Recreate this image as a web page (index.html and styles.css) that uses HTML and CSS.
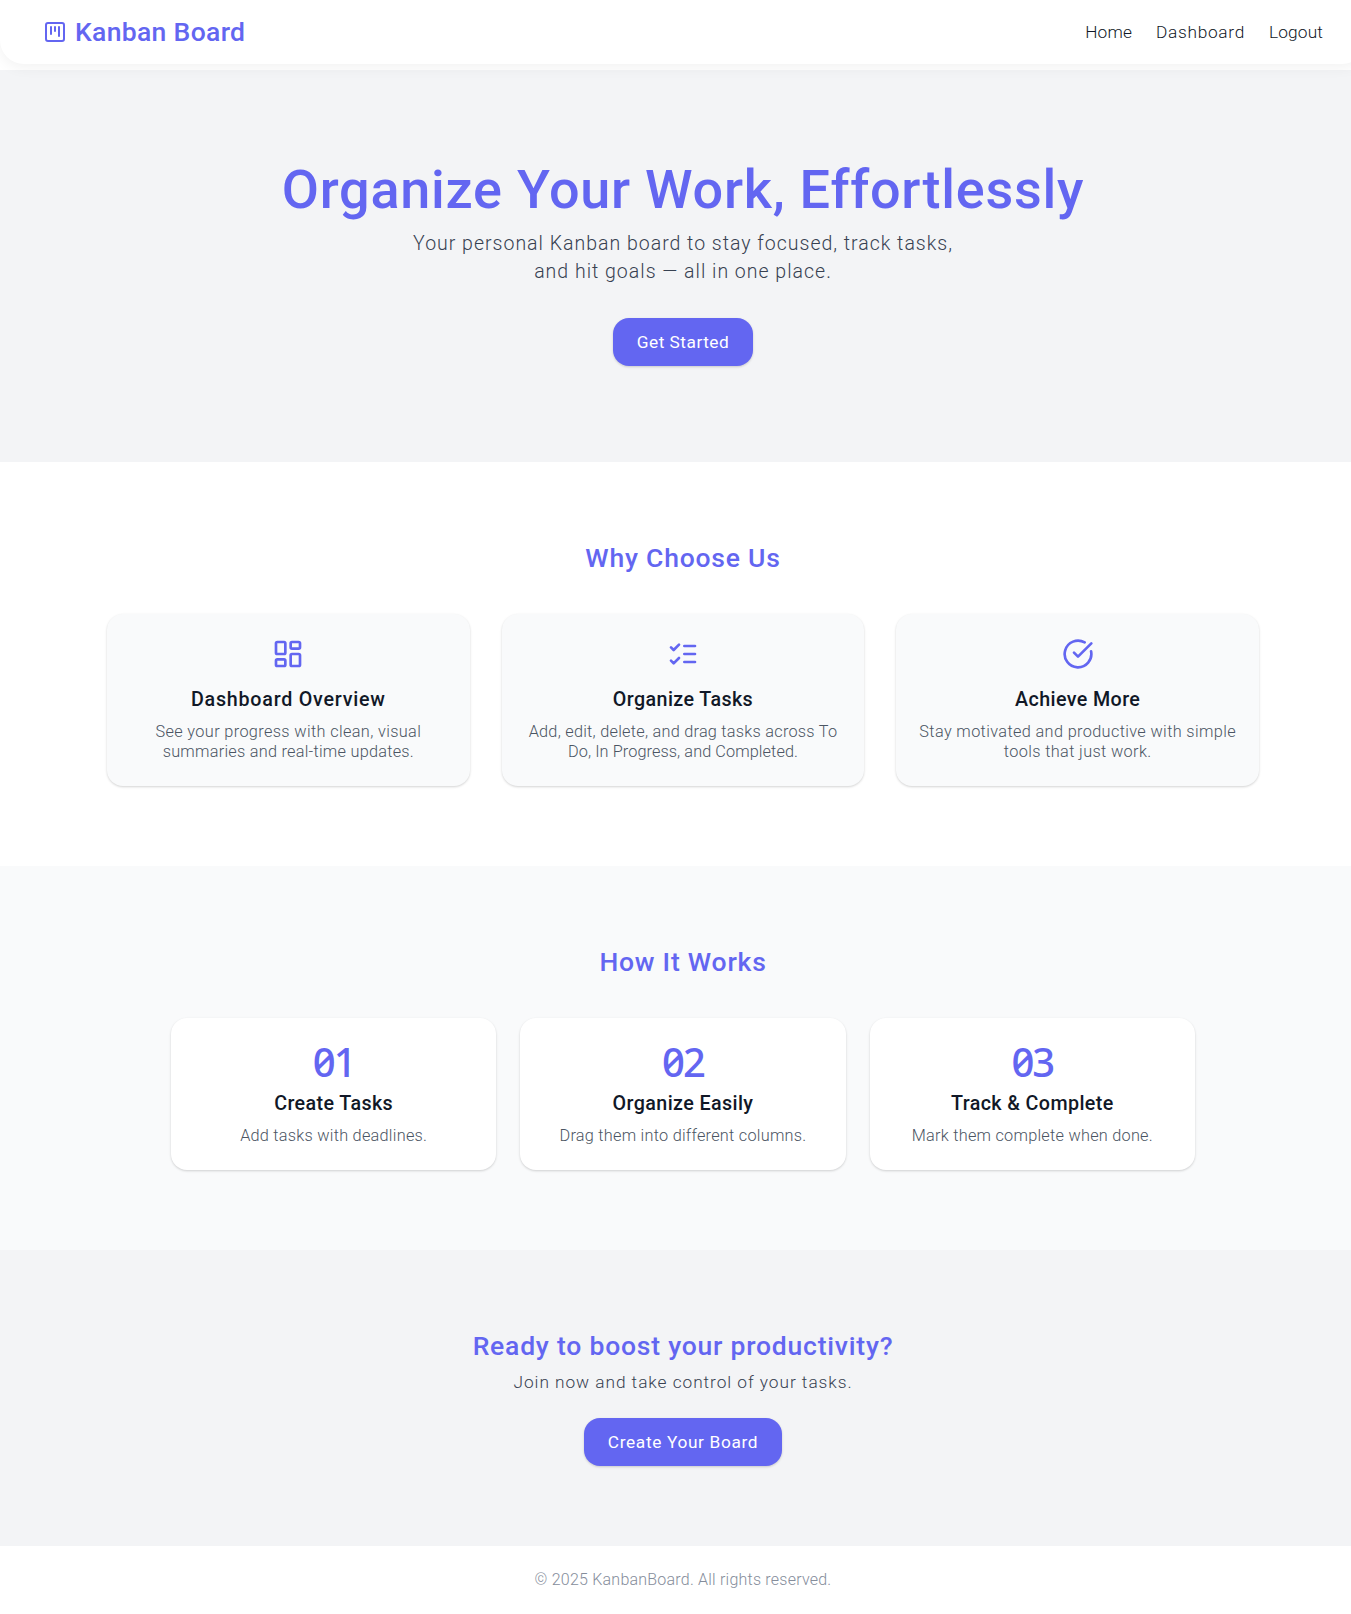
FILE: index.html
```html
<!DOCTYPE html>
<html lang="en">
<head>
<meta charset="utf-8">
<title>Kanban Board</title>
<link rel="stylesheet" href="styles.css">
</head>
<body>
<div class="page">
  <header class="header">
    <a class="logo">
      <svg class="icon logo-icon" viewBox="0 0 24 24"><rect x="3" y="3" width="18" height="18" rx="2"/><path d="M8 7v7M12 7v4M16 7v9"/></svg>
      <span>Kanban Board</span>
    </a>
    <nav class="nav">
      <a>Home</a>
      <a class="nav-wide">Dashboard</a>
      <a>Logout</a>
    </nav>
  </header>

  <main>
    <section class="hero">
      <h1 class="hero-title">Organize Your Work, Effortlessly</h1>
      <p class="hero-text">Your personal Kanban board to stay focused, track tasks,<br>and hit goals — all in one place.</p>
      <a class="button button-hero">Get Started</a>
    </section>

    <section class="section features">
      <h2 class="heading">Why Choose Us</h2>
      <div class="feature-grid">
        <article class="card card-muted">
          <svg class="icon card-icon" viewBox="0 0 24 24"><rect x="3" y="3" width="7" height="9" rx="1"/><rect x="14" y="3" width="7" height="5" rx="1"/><rect x="14" y="12" width="7" height="9" rx="1"/><rect x="3" y="16" width="7" height="5" rx="1"/></svg>
          <h3 class="card-title wide">Dashboard Overview</h3>
          <p class="card-text"><span class="loose">See your progress with clean, visual</span><br>summaries and real-time updates.</p>
        </article>
        <article class="card card-muted">
          <svg class="icon card-icon" viewBox="0 0 24 24"><path d="m3 17 2 2 4-4M3 7l2 2 4-4M13 6h8M13 12h8M13 18h8"/></svg>
          <h3 class="card-title">Organize Tasks</h3>
          <p class="card-text">Add, edit, delete, and drag tasks across To<br><span class="tight">Do, In Progress, and Completed.</span></p>
        </article>
        <article class="card card-muted">
          <svg class="icon card-icon" viewBox="0 0 24 24"><path d="M21.801 10A10 10 0 1 1 17 3.335"/><path d="m9 11 3 3L22 4"/></svg>
          <h3 class="card-title">Achieve More</h3>
          <p class="card-text"><span class="loose">Stay motivated and productive with simple<br>tools that just work.</span></p>
        </article>
      </div>
    </section>

    <section class="section steps">
      <h2 class="heading">How It Works</h2>
      <div class="step-grid">
        <article class="card">
          <div class="step-number">01</div>
          <h3 class="card-title">Create Tasks</h3>
          <p class="card-text">Add tasks with deadlines.</p>
        </article>
        <article class="card">
          <div class="step-number">02</div>
          <h3 class="card-title">Organize Easily</h3>
          <p class="card-text">Drag them into different columns.</p>
        </article>
        <article class="card">
          <div class="step-number">03</div>
          <h3 class="card-title">Track &amp; Complete</h3>
          <p class="card-text">Mark them complete when done.</p>
        </article>
      </div>
    </section>

    <section class="section cta">
      <h2 class="heading cta-heading">Ready to boost your productivity?</h2>
      <p class="cta-text">Join now and take control of your tasks.</p>
      <a class="button button-cta">Create Your Board</a>
    </section>
  </main>

  <footer class="footer">© 2025 KanbanBoard. All rights reserved.</footer>
</div>
</body>
</html>
```

FILE: styles.css
```css
* {
  box-sizing: border-box;
  margin: 0;
  padding: 0;
}

html {
  overflow: hidden;
}

body {
  font-family: Roboto, "Liberation Sans", sans-serif;
  color: #111827;
  background: #fff;
}

.page {
  width: 1366px;
}

.icon {
  display: block;
  fill: none;
  stroke: #6366f1;
  stroke-width: 2;
  stroke-linecap: round;
  stroke-linejoin: round;
}

/* Header */
.header {
  position: relative;
  display: flex;
  align-items: center;
  justify-content: space-between;
  height: 64px;
  margin-bottom: 6px;
  padding: 0 43px;
  background: #fff;
  border-radius: 0 0 24px 24px;
  box-shadow: 0 4px 14px rgba(0, 0, 0, 0.05);
}

.logo {
  display: flex;
  align-items: center;
  gap: 8px;
  color: #6366f1;
  font-size: 26.5px;
  font-weight: 500;
  letter-spacing: 0.33px;
  line-height: 32px;
}

.logo-icon {
  width: 24px;
  height: 24px;
}

.nav {
  display: flex;
  gap: 24px;
  color: #111827;
  font-size: 17.3px;
  font-weight: 300;
  letter-spacing: 0.15px;
  line-height: 24px;
}

.nav-wide {
  letter-spacing: 0.7px;
}

/* Hero */
.hero {
  display: flex;
  flex-direction: column;
  align-items: center;
  padding: 96px 0;
  background: #f3f4f6;
  text-align: center;
}

.hero-title {
  margin-bottom: 16px;
  color: #6366f1;
  font-size: 54px;
  font-weight: 500;
  letter-spacing: 0.74px;
  line-height: 48px;
}

.hero-text {
  margin-bottom: 32px;
  color: #374151;
  font-size: 19.5px;
  font-weight: 300;
  letter-spacing: 1px;
  line-height: 28px;
}

.button {
  display: flex;
  align-items: center;
  justify-content: center;
  height: 48px;
  color: #fff;
  background: #6366f1;
  border-radius: 16px;
  box-shadow: 0 1px 3px rgba(0, 0, 0, 0.1), 0 1px 2px rgba(0, 0, 0, 0.08);
  font-size: 17.3px;
  font-weight: 400;
}

.button-hero {
  width: 140px;
  letter-spacing: 0.5px;
}

.button-cta {
  width: 198px;
  letter-spacing: 0.64px;
}

/* Shared sections */
.section {
  display: flex;
  flex-direction: column;
  align-items: center;
  padding: 80px 0;
  text-align: center;
}

.heading {
  margin-bottom: 40px;
  color: #6366f1;
  font-size: 26.5px;
  font-weight: 500;
  letter-spacing: 0.78px;
  line-height: 32px;
}

.features {
  background: #fff;
}

.feature-grid {
  display: grid;
  grid-template-columns: repeat(3, 1fr);
  gap: 32px;
  width: 1152px;
}

.steps {
  background: #f9fafb;
}

.step-grid {
  display: grid;
  grid-template-columns: repeat(3, 1fr);
  gap: 24px;
  width: 1024px;
}

.card {
  padding: 24px 0;
  background: #fff;
  border-radius: 16px;
  box-shadow: 0 1px 3px rgba(0, 0, 0, 0.1), 0 1px 2px rgba(0, 0, 0, 0.08);
}

.card-muted {
  background: #f9fafb;
}

.card-icon {
  width: 32px;
  height: 32px;
  margin: 0 auto 16px;
}

.card-title {
  margin-bottom: 8px;
  font-size: 19.7px;
  font-weight: 500;
  letter-spacing: 0.4px;
  line-height: 28px;
}

.card-title.wide {
  letter-spacing: 0.77px;
}

.card-text {
  color: #4b5563;
  font-size: 16.3px;
  font-weight: 300;
  letter-spacing: 0.25px;
  line-height: 20px;
}

.loose {
  letter-spacing: 0.36px;
}

.tight {
  letter-spacing: 0.08px;
}

.step-number {
  margin-bottom: 8px;
  color: #6366f1;
  font-family: "Noto Sans", Roboto, sans-serif;
  font-feature-settings: "zero";
  font-size: 40px;
  font-weight: 500;
  letter-spacing: -2px;
  line-height: 40px;
}

/* Call to action */
.cta {
  background: #f3f4f6;
}

.cta-heading {
  margin-bottom: 8px;
}

.cta-text {
  margin-bottom: 24px;
  color: #374151;
  font-size: 17.3px;
  font-weight: 300;
  letter-spacing: 0.95px;
  line-height: 24px;
}

/* Footer */
.footer {
  padding: 24px 0;
  color: #858d9b;
  background: #fff;
  font-size: 16px;
  font-weight: 300;
  letter-spacing: 0.22px;
  line-height: 20px;
  text-align: center;
}
```
